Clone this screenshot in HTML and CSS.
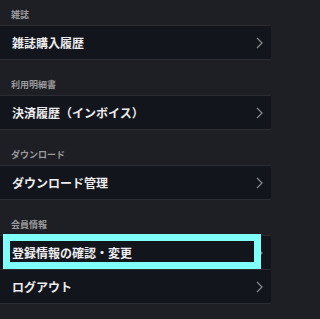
FILE: index.html
```html
<!DOCTYPE html>
<html lang="ja">
<head>
<meta charset="utf-8">
<link rel="stylesheet" href="styles.css">
</head>
<body>
<div class="page">
  <section class="section">
    <div class="label">雑誌</div>
    <ul class="list">
      <li class="row"><span class="text">雑誌購入履歴</span><svg class="chev" viewBox="0 0 7 12"><polyline points="1,1 6,6 1,11"/></svg></li>
    </ul>
  </section>
  <section class="section">
    <div class="label">利用明細書</div>
    <ul class="list">
      <li class="row"><span class="text">決済履歴（インボイス）</span><svg class="chev" viewBox="0 0 7 12"><polyline points="1,1 6,6 1,11"/></svg></li>
    </ul>
  </section>
  <section class="section">
    <div class="label">ダウンロード</div>
    <ul class="list">
      <li class="row"><span class="text">ダウンロード管理</span><svg class="chev" viewBox="0 0 7 12"><polyline points="1,1 6,6 1,11"/></svg></li>
    </ul>
  </section>
  <section class="section">
    <div class="label">会員情報</div>
    <ul class="list">
      <li class="row focused"><span class="text">登録情報の確認・変更</span><svg class="chev" viewBox="0 0 7 12"><polyline points="1,1 6,6 1,11"/></svg><span class="focus-ring"></span></li>
      <li class="row"><span class="text">ログアウト</span><svg class="chev" viewBox="0 0 7 12"><polyline points="1,1 6,6 1,11"/></svg></li>
    </ul>
  </section>
</div>
</body>
</html>
```

FILE: styles.css
```css
html, body {
  margin: 0;
  padding: 0;
  background: #1e1f24;
}
body {
  font-family: "Noto Sans CJK JP", "Noto Sans", sans-serif;
  width: 271px;
  height: 319px;
  overflow: hidden;
}
.page {
  display: flex;
  flex-direction: column;
}
.section + .section {
  margin-top: 10px;
}
.label {
  height: 13px;
  padding: 8px 11px 4px;
  font-size: 9px;
  line-height: 13px;
  font-weight: 700;
  color: #9a9a9c;
}
.list {
  list-style: none;
  margin: 0;
  padding: 0;
  border-top: 1px solid #2c2d32;
}
.row {
  position: relative;
  display: flex;
  align-items: center;
  justify-content: space-between;
  height: 33px;
  padding: 0 8px 0 12px;
  background: #13151c;
  border-bottom: 1px solid #2c2d32;
}
.text {
  font-size: 12px;
  line-height: 16px;
  font-weight: 700;
  color: #ececee;
}
.chev {
  width: 7px;
  height: 12px;
  fill: none;
  stroke: #85868a;
  stroke-width: 1.3;
}
.focus-ring {
  position: absolute;
  left: 3px;
  top: -2px;
  width: 244px;
  height: 21px;
  border: 7px solid #80fffa;
}
```
